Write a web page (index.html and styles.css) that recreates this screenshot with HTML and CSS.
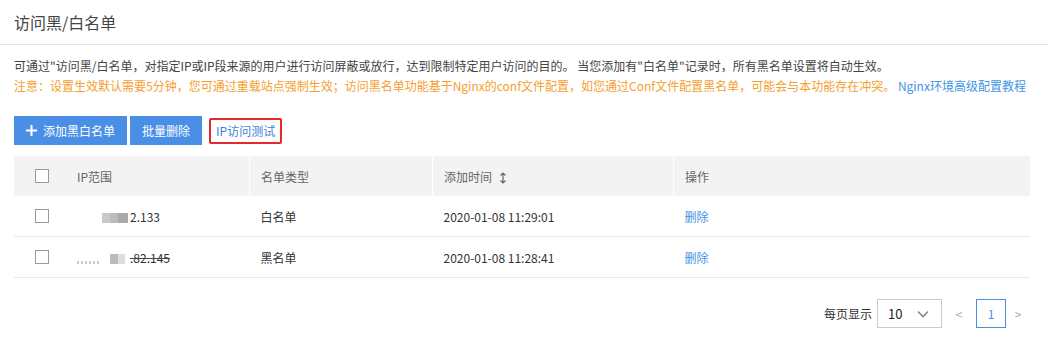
FILE: index.html
```html
<!DOCTYPE html>
<html>

<head>
    <title>访问黑/白名单</title>
    <link rel="stylesheet" href="styles.css">
</head>

<body>
    <div class="page-header">访问黑/白名单</div>

    <div class="content">
        <div class="tips">
            <p>可通过"访问黑/白名单，对指定IP或IP段来源的用户进行访问屏蔽或放行，达到限制特定用户访问的目的。 当您添加有"白名单"记录时，所有黑名单设置将自动生效。</p>
            <p class="warn">注意：设置生效默认需要5分钟，您可通过重载站点强制生效；访问黑名单功能基于Nginx的conf文件配置，如您通过Conf文件配置黑名单，可能会与本功能存在冲突。 <a class="link" href="#">Nginx环境高级配置教程</a></p>
        </div>

        <div class="toolbar">
            <button class="btn btn-primary">
                <svg class="plus" width="11" height="11" viewBox="0 0 11 11"><path d="M5.5 0v11M0 5.5h11" stroke="#fff" stroke-width="2"/></svg>
                添加黑白名单
            </button>
            <button class="btn btn-primary">批量删除</button>
            <button class="btn btn-text">IP访问测试</button>
        </div>

        <table class="list">
            <thead>
                <tr>
                    <th class="col-check"><span class="checkbox"></span></th>
                    <th class="col-ip">IP范围</th>
                    <th class="col-type">名单类型</th>
                    <th class="col-time">添加时间
                        <svg class="sort" width="8" height="12" viewBox="0 0 8 12"><path d="M4 1v10M1.5 3.5L4 1l2.5 2.5M1.5 8.5L4 11l2.5-2.5" fill="none" stroke="#666" stroke-width="1.2"/></svg>
                    </th>
                    <th class="col-op">操作</th>
                </tr>
            </thead>
            <tbody>
                <tr>
                    <td class="col-check"><span class="checkbox"></span></td>
                    <td class="col-ip"><span class="blur"><i class="b1"></i><i class="b2"></i><i class="b3"></i></span>2.133</td>
                    <td>白名单</td>
                    <td>2020-01-08 11:29:01</td>
                    <td><a class="link" href="#">删除</a></td>
                </tr>
                <tr>
                    <td class="col-check"><span class="checkbox"></span></td>
                    <td class="col-ip"><span class="blur"><i class="b4"></i><i class="b2"></i><i class="b5"></i></span><s>.82.145</s></td>
                    <td class="muted">黑名单</td>
                    <td>2020-01-08 11:28:41</td>
                    <td><a class="link" href="#">删除</a></td>
                </tr>
            </tbody>
        </table>

        <div class="pager">
            <span class="pager-label">每页显示</span>
            <div class="select">
                <span>10</span>
                <svg width="12" height="8" viewBox="0 0 12 8"><path d="M1 1.5l5 5 5-5" fill="none" stroke="#888" stroke-width="1.6"/></svg>
            </div>
            <span class="arrow">&lt;</span>
            <span class="page-num">1</span>
            <span class="arrow arrow-next">&gt;</span>
        </div>
    </div>
</body>

</html>
```

FILE: styles.css
```css
body {
    margin: 0;
    font-family: "Noto Sans CJK SC", "Liberation Sans", sans-serif;
    font-size: 12px;
    color: #444;
    background: #fff;
}

.page-header {
    height: 44px;
    line-height: 44px;
    padding-left: 14px;
    font-size: 16px;
    color: #444;
    border-bottom: 1px solid #e5e5e5;
}

.content {
    padding: 0 18px 0 14px;
}

.tips {
    padding-top: 11px;
}

.tips p {
    margin: 0;
    line-height: 20px;
    color: #444;
}

.tips .warn {
    color: #f5a030;
}

.link {
    color: #3f95e2;
    text-decoration: none;
}

.toolbar {
    display: flex;
    align-items: center;
    gap: 3px;
    margin-top: 20px;
}

.btn {
    height: 29px;
    border: none;
    font-family: inherit;
    font-size: 12px;
    padding: 0 12px;
    cursor: pointer;
}

.btn-primary {
    background: #4a8fe6;
    color: #fff;
    display: flex;
    align-items: center;
    gap: 6px;
}

.plus {
    display: block;
}

.btn-text {
    margin-left: 4px;
    height: 26px;
    padding: 0 5px;
    background: #fff;
    color: #3f7fd8;
    border: 2px solid #e52828;
    border-radius: 2px;
}

.list {
    width: 100%;
    margin-top: 11px;
    border-collapse: collapse;
    table-layout: fixed;
}

.list th {
    height: 40px;
    background: #f3f3f3;
    font-weight: normal;
    text-align: left;
    color: #666;
    padding: 0 0 0 11px;
    border-left: 1px solid #fff;
}

.list th:first-child,
.list th:nth-child(2) {
    border-left: none;
}

.list td {
    height: 40px;
    padding: 0 0 0 11px;
    border-bottom: 1px solid #e8e8e8;
    color: #333;
}

.list .col-check {
    width: 29px;
    padding-left: 21px;
}

.list .col-ip {
    width: 172px;
    padding-left: 13px;
}

.list .col-type {
    width: 171px;
}

.list .col-time {
    width: 229px;
}

.sort {
    vertical-align: -2px;
    margin-left: 4px;
}

.checkbox {
    display: block;
    width: 12px;
    height: 12px;
    border: 1px solid #999;
    background: #fff;
}

.muted {
    color: #666;
}

.blur {
    display: inline-block;
    width: 53px;
    height: 10px;
    position: relative;
    vertical-align: -1px;
}

.blur i {
    position: absolute;
    top: 0;
    height: 10px;
}

.blur .b1 {
    left: 25px;
    width: 8px;
    background: #c8c8c8;
}

.blur .b2 {
    left: 33px;
    width: 8px;
    background: #bbb;
}

.blur .b3 {
    left: 41px;
    width: 10px;
    background: #aaa;
}

.blur .b4 {
    left: 0;
    top: 7px;
    width: 24px;
    height: 3px;
    background: repeating-linear-gradient(90deg, #ccc 0 2px, transparent 2px 4px);
}

.blur .b5 {
    left: 41px;
    width: 7px;
    background: #ddd;
}

s {
    text-decoration-color: #444;
}

.pager {
    display: flex;
    align-items: center;
    justify-content: flex-end;
    margin-top: 21px;
}

.pager-label {
    color: #333;
    margin-right: 5px;
}

.select {
    width: 63px;
    height: 27px;
    border: 1px solid #ccc;
    display: flex;
    align-items: center;
    justify-content: space-between;
}

.select span {
    font-size: 13px;
    margin-left: 10px;
    color: #222;
}

.select svg {
    margin-right: 12px;
}

.arrow {
    color: #aaa;
    font-size: 12px;
    width: 34px;
    text-align: center;
}

.arrow-next {
    width: 24px;
}

.page-num {
    width: 28px;
    height: 27px;
    border: 1px solid #4a8fe6;
    color: #4a8fe6;
    display: flex;
    align-items: center;
    justify-content: center;
}
```
